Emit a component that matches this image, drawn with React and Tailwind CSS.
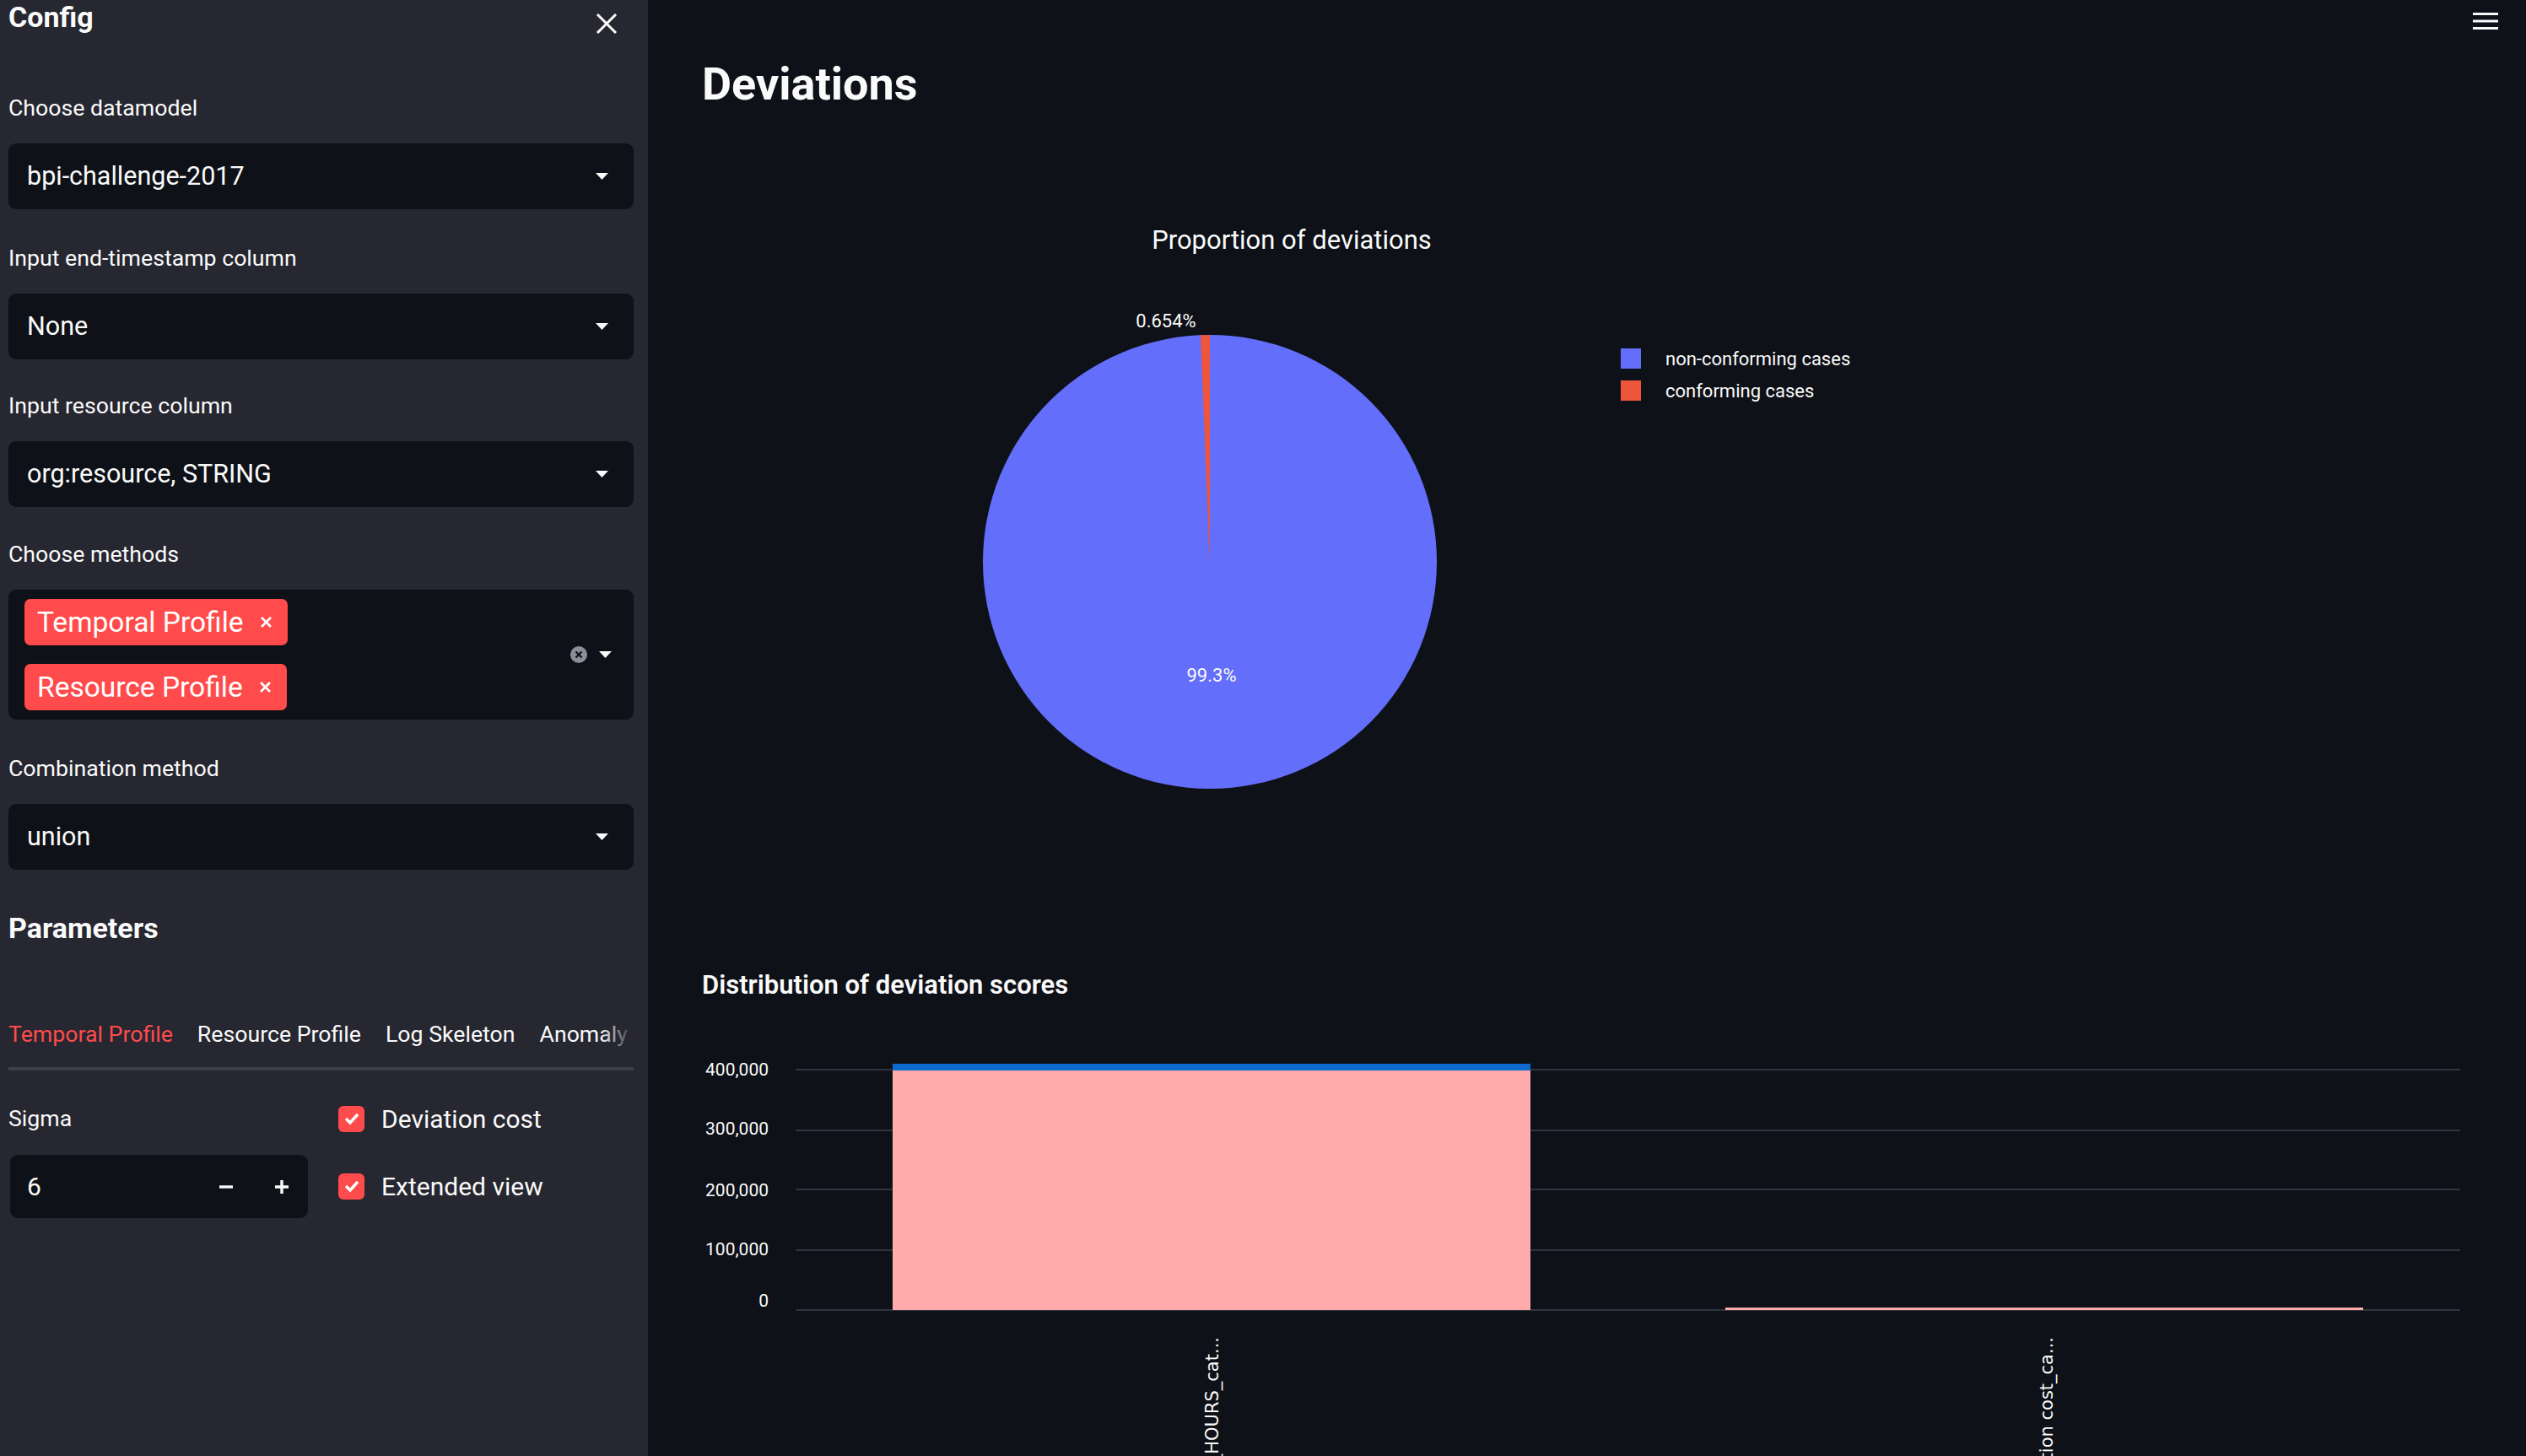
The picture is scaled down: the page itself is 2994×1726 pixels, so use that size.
import React from 'react'

const FONT = { fontFamily: '"Source Sans Pro", Roboto, "Noto Sans", sans-serif' }
const TICK_FONT = { fontFamily: '"DejaVu Sans", Verdana, sans-serif' }

const Caret = ({ className = '' }) => (
    <svg width="15" height="8" viewBox="0 0 15 8" className={className}>
        <polygon points="0,0 15,0 7.5,8" fill="#fafafa" />
    </svg>
)

const Label = ({ children, className = '' }) => (
    <div className={`text-[26.7px] leading-[36px] text-[#fafafa] ${className}`}>{children}</div>
)

const Select = ({ value }) => (
    <div className="mt-[24px] flex h-[78px] items-center justify-between rounded-[9px] bg-[#0e1117] pl-[22px] pr-[30px]">
        <span className="text-[30.5px] leading-none text-[#fafafa]">{value}</span>
        <Caret />
    </div>
)

const Tag = ({ children }) => (
    <div className="flex h-[55px] w-fit items-center gap-[19px] rounded-[7px] bg-[#ff4b4b] pl-[15px] pr-[18px] text-[33.5px] leading-none text-white">
        <span>{children}</span>
        <svg width="15" height="15" viewBox="0 0 15 15">
            <path d="M2 2 L13 13 M13 2 L2 13" stroke="#fff" strokeWidth="2.6" />
        </svg>
    </div>
)

const Check = () => (
    <div className="flex h-[31px] w-[31px] items-center justify-center rounded-[6px] bg-[#ff4b4b]">
        <svg width="20" height="16" viewBox="0 0 20 16">
            <path d="M3 8 L8 13 L17 3" stroke="#fff" strokeWidth="3.4" fill="none" />
        </svg>
    </div>
)

const Sidebar = () => (
    <aside className="flex h-full w-[768px] shrink-0 flex-col bg-[#262730] pl-[10px] pr-[17px] text-[#fafafa]">
        <div className="flex items-center justify-between pr-[19px]">
            <h2 className="text-[34px] font-bold leading-[38px]">Config</h2>
            <svg width="26" height="24" viewBox="0 0 26 24" className="mt-[16px]">
                <path d="M2 1 L24 23 M24 1 L2 23" stroke="#fafafa" strokeWidth="3" />
            </svg>
        </div>

        <Label className="mt-[70px]">Choose datamodel</Label>
        <Select value="bpi-challenge-2017" />

        <Label className="mt-[40px]">Input end-timestamp column</Label>
        <Select value="None" />

        <Label className="mt-[37px]">Input resource column</Label>
        <Select value="org:resource, STRING" />

        <Label className="mt-[38px]">Choose methods</Label>
        <div className="mt-[24px] flex h-[154px] items-center justify-between rounded-[9px] bg-[#0e1117] pl-[19px] pr-[26px]">
            <div className="flex flex-col gap-[22px]">
                <Tag>Temporal Profile</Tag>
                <Tag>Resource Profile</Tag>
            </div>
            <div className="flex items-center gap-[14px]">
                <svg width="20" height="20" viewBox="0 0 20 20">
                    <circle cx="10" cy="10" r="10" fill="#8b8d98" />
                    <path d="M6.5 6.5 L13.5 13.5 M13.5 6.5 L6.5 13.5" stroke="#0e1117" strokeWidth="2.2" />
                </svg>
                <Caret />
            </div>
        </div>

        <Label className="mt-[40px]">Combination method</Label>
        <Select value="union" />

        <h3 className="mt-[47px] text-[34px] font-bold leading-[44px]">Parameters</h3>

        <div className="relative mt-[86px] flex gap-[29px] overflow-hidden whitespace-nowrap border-b-[4px] border-[#3d3e48] text-[26.7px] leading-[36px]">
            <div className="-mb-[4px] border-b-[4px] border-[#ff4b4b] pb-[21px] text-[#ff4b4b]">Temporal Profile</div>
            <div className="pb-[21px]">Resource Profile</div>
            <div className="pb-[21px]">Log Skeleton</div>
            <div className="pb-[21px]">Anomaly Detection</div>
            <div className="absolute right-0 top-0 h-[40px] w-[40px] bg-gradient-to-r from-transparent to-[#262730]" />
        </div>

        <div className="mt-[39px] grid grid-cols-[355px_1fr] gap-x-[36px]">
            <div className="flex flex-col">
                <Label>Sigma</Label>
                <div className="ml-[2px] mt-[25px] flex h-[75px] items-center justify-between rounded-[9px] bg-[#0e1117] pl-[20px] pr-[22px]">
                    <span className="text-[30px]">6</span>
                    <div className="flex items-center gap-[48px]">
                        <svg width="18" height="18" viewBox="0 0 18 18">
                            <path d="M1 9 H17" stroke="#fafafa" strokeWidth="3.4" />
                        </svg>
                        <svg width="18" height="18" viewBox="0 0 18 18">
                            <path d="M1 9 H17 M9 1 V17" stroke="#fafafa" strokeWidth="3.4" />
                        </svg>
                    </div>
                </div>
            </div>
            <div className="-mt-[14px] flex flex-col gap-[16px]">
                <div className="flex h-[64px] items-center gap-[20px]">
                    <Check />
                    <span className="text-[30px]">Deviation cost</span>
                </div>
                <div className="flex h-[64px] items-center gap-[20px]">
                    <Check />
                    <span className="text-[30px]">Extended view</span>
                </div>
            </div>
        </div>
    </aside>
)

const PieChart = () => {
    const cx = 602
    const cy = 534
    const r = 269
    const a = (357.646 * Math.PI) / 180
    const px = cx + r * Math.sin(a)
    const py = cy - r * Math.cos(a)
    return (
        <svg width="2084" height="988" className="block" style={FONT}>
            <text x="699" y="163" textAnchor="middle" fontSize="31" fill="#fafafa">
                Proportion of deviations
            </text>
            <circle cx={cx} cy={cy} r={r} fill="#636efa" />
            <path d={`M${cx} ${cy} L${px} ${py} A${r} ${r} 0 0 1 ${cx} ${cy - r} Z`} fill="#ef553b" />
            <text x="550" y="256" textAnchor="middle" fontSize="22" fill="#fafafa">0.654%</text>
            <text x="604" y="676" textAnchor="middle" fontSize="22" fill="#fafafa">99.3%</text>
            <rect x="1089" y="281" width="24" height="24" fill="#636efa" />
            <rect x="1089" y="319" width="24" height="24" fill="#ef553b" />
            <text x="1142" y="301" fontSize="22" fill="#fafafa">non-conforming cases</text>
            <text x="1142" y="339" fontSize="22" fill="#fafafa">conforming cases</text>
        </svg>
    )
}

const BarChart = () => {
    const ticks = [
        { y: 80, label: '400,000', ly: 87 },
        { y: 152, label: '300,000', ly: 157 },
        { y: 222, label: '200,000', ly: 230 },
        { y: 294, label: '100,000', ly: 300 },
        { y: 365, label: '0', ly: 361 },
    ]
    return (
        <svg width="2084" height="538" className="block" style={FONT}>
            {ticks.map((t) => (
                <g key={t.label}>
                    <line x1="111" x2="2084" y1={t.y} y2={t.y} stroke="#31333f" strokeWidth="2" />
                    <text x="79" y={t.ly} textAnchor="end" fontSize="21" fill="#fafafa">{t.label}</text>
                </g>
            ))}
            <rect x="226" y="81" width="756" height="284" fill="#ffabab" />
            <rect x="226" y="73" width="756" height="8" fill="#0f6bcf" />
            <rect x="1213" y="362" width="756" height="3" fill="#ffabab" />
            <text
                x="612"
                y="397"
                transform="rotate(-90 612 397)"
                textAnchor="end"
                fontSize="21"
                fill="#fafafa"
                style={TICK_FONT}
            >
                WORKING_HOURS_cat...
            </text>
            <text
                x="1601"
                y="397"
                transform="rotate(-90 1601 397)"
                textAnchor="end"
                fontSize="21"
                fill="#fafafa"
                style={TICK_FONT}
            >
                deviation cost_ca...
            </text>
        </svg>
    )
}

export default function App() {
    return (
        <div className="flex h-[1726px] w-full overflow-hidden bg-[#0e1117]" style={FONT}>
            <Sidebar />
            <main className="relative flex-1 pl-[64px] pr-[78px] pt-[67px] text-[#fafafa]">
                <svg width="30" height="22" viewBox="0 0 30 22" className="absolute right-[33px] top-[14px]">
                    <path d="M0 2.5 H30 M0 11 H30 M0 19.5 H30" stroke="#fafafa" strokeWidth="3" />
                </svg>
                <h1 className="text-[54px] font-bold leading-[65px]">Deviations</h1>
                <PieChart />
                <h3 className="mt-[28px] text-[31px] font-semibold leading-[40px]">Distribution of deviation scores</h3>
                <BarChart />
            </main>
        </div>
    )
}
